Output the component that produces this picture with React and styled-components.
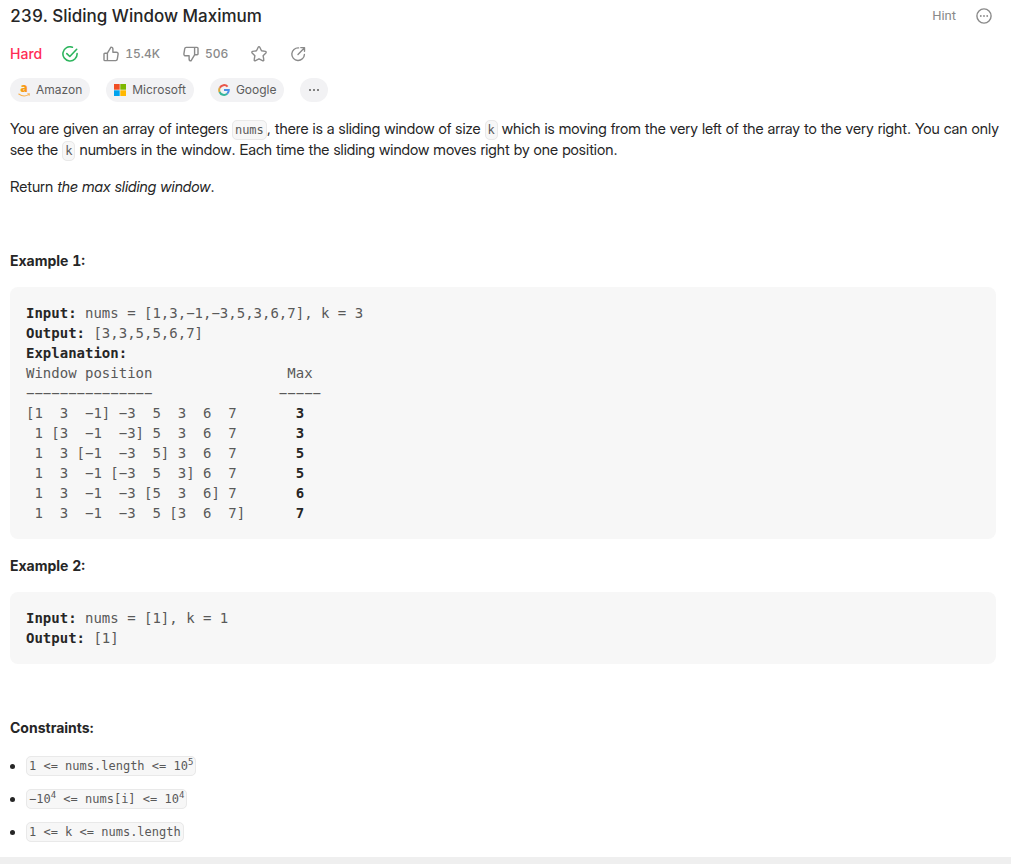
import React from "react";
import styled, { createGlobalStyle } from "styled-components";

const Global = createGlobalStyle`
  * { box-sizing: border-box; }
  body {
    margin: 0;
    background: #fff;
    color: #262626;
    font-family: Inter, "Liberation Sans", sans-serif;
    font-size: 14px;
    line-height: 21px;
    font-variant-numeric: tabular-nums;
  }
`;

const Page = styled.main`
  padding: 4px 15px 4px 10px;
  border-bottom: 7px solid #efefef;
`;

const Header = styled.header`
  display: flex;
  align-items: center;
  justify-content: space-between;
  padding-right: 4px;
`;

const Title = styled.h1`
  margin: 0;
  font-size: 17px;
  line-height: 24px;
  font-weight: 500;
`;

const Row = styled.div`
  display: flex;
  align-items: center;
  gap: ${(p) => p.$gap}px;
  margin-top: ${(p) => p.$top || 0}px;
`;

const IconButton = styled.button`
  display: flex;
  align-items: center;
  gap: 6px;
  padding: 0;
  border: 0;
  background: none;
  color: #8a8a8a;
  font-family: Inter, sans-serif;
  font-size: 12px;
  line-height: 16px;
  font-weight: 500;
  font-variant-numeric: tabular-nums;
  cursor: pointer;
  svg { display: block; }
`;

const HintButton = styled(IconButton)`
  font-family: Roboto, sans-serif;
  font-size: 13px;
  font-weight: 400;
`;

const Difficulty = styled.span`
  color: #ff2d55;
  font-weight: 500;
  margin-right: 4px;
`;

const Solved = styled.span`
  display: flex;
  color: #2db55d;
  margin-right: 9px;
`;

const Tag = styled.button`
  display: flex;
  align-items: center;
  gap: 6px;
  height: 24px;
  padding: 0 8px;
  border: 0;
  border-radius: 12px;
  background: #f2f2f4;
  color: #5c5c5c;
  font: 400 12px/16px Inter, sans-serif;
  cursor: pointer;
  svg { display: block; }
`;

const Paragraph = styled.p`
  margin: 16px -8px 16px 0;
  font-family: "Inter Display", Inter, sans-serif;
  font-size: 15px;
`;

const Heading = styled.h2`
  margin: 16px 0;
  font-size: 14px;
  line-height: 21px;
  font-weight: 700;
`;

const Code = styled.code`
  padding: 2px;
  border: 1px solid #e9e9e9;
  border-radius: 5px;
  background: #f7f7f7;
  color: #595959;
  font: 12px/16px "DejaVu Sans Mono", monospace;
  white-space: nowrap;
  sup {
    font-size: 9px;
    line-height: 0;
  }
`;

const Block = styled.pre`
  margin: 0 0 16px;
  padding: 16px;
  border-radius: 8px;
  background: #f7f7f7;
  color: #595959;
  font: 14px/20px "DejaVu Sans Mono", monospace;
  overflow-x: auto;
  b { color: #262626; }
`;

const List = styled.ul`
  margin: 0;
  padding: 0 0 0 16px;
  list-style: none;
`;

const Item = styled.li`
  margin-bottom: 12px;
  &::before {
    content: "";
    display: inline-block;
    width: 5px;
    height: 5px;
    margin: 0 11px 0 -16px;
    border-radius: 50%;
    background: #262626;
    vertical-align: middle;
  }
`;

const Line = ({ size = 16, children }) => (
  <svg width={size} height={size} viewBox="0 0 16 16" fill="none" stroke="currentColor" strokeWidth="1.4" strokeLinecap="round" strokeLinejoin="round" aria-hidden="true">
    {children}
  </svg>
);

const thumb = "M4.4 7.2H1.9a.9.9 0 0 0-.9.9v5.6a.9.9 0 0 0 .9.9h2.5M4.4 7.2v7.4h8.3a1.6 1.6 0 0 0 1.6-1.4l.8-5a1.7 1.7 0 0 0-1.7-2H9.9V3.1A2 2 0 0 0 8 1.1L4.4 7.2";

const Check = () => (
  <Line>
    <path strokeWidth="1.6" d="M10.4 1.2A7.1 7.1 0 1 0 15.1 7.6" />
    <path strokeWidth="1.6" d="M4.8 7.6l3 2.9 6.9-7.2" />
  </Line>
);
const Like = () => <Line><path d={thumb} /></Line>;
const Dislike = () => <Line><g transform="rotate(180 8 8)"><path d={thumb} /></g></Line>;
const Star = () => (
  <Line><path d="M7.2 1.3a.9.9 0 0 1 1.6 0l1.7 3.5 3.9.6a.9.9 0 0 1 .5 1.5l-2.8 2.8.7 4a.9.9 0 0 1-1.3 1L8 12.8l-3.5 1.9a.9.9 0 0 1-1.3-1l.7-4-2.8-2.8a.9.9 0 0 1 .5-1.5l3.9-.6z" /></Line>
);
const Share = () => (
  <Line>
    <path d="M8.6 1.9A6.3 6.3 0 1 0 14.4 8.4" />
    <path d="M8 8.4l6.3-6.5M10.8 1.6h3.7v3.7" />
  </Line>
);
const More = () => (
  <Line>
    <circle cx="8" cy="8" r="7.1" />
    <g fill="currentColor" stroke="none">
      <circle cx="4.8" cy="8" r=".9" /><circle cx="8" cy="8" r=".9" /><circle cx="11.2" cy="8" r=".9" />
    </g>
  </Line>
);

const Amazon = () => (
  <svg width="12" height="22" viewBox="0 0 12 22" aria-hidden="true">
    <text x="6" y="13" textAnchor="middle" fontFamily="Open Sans" fontWeight="800" fontSize="12" fill="#f79b14">a</text>
    <path d="M.8 15c3 2.2 7 2.3 9.8.6" fill="none" stroke="#f9b04a" strokeWidth="1.1" strokeLinecap="round" />
    <path d="M9.6 14.7l2-.1-.4 1.9" fill="none" stroke="#f9b04a" strokeWidth=".8" strokeLinecap="round" />
  </svg>
);
const Microsoft = () => (
  <svg width="12" height="12" viewBox="0 0 12 12" aria-hidden="true">
    <path fill="#f04e23" d="M0 0h5.7v5.7H0z" /><path fill="#7db700" d="M6.3 0H12v5.7H6.3z" />
    <path fill="#00a3ee" d="M0 6.3h5.7V12H0z" /><path fill="#ffb800" d="M6.3 6.3H12V12H6.3z" />
  </svg>
);
const Google = () => (
  <svg width="12" height="12" viewBox="0 0 12 12" fill="none" strokeWidth="2" aria-hidden="true">
    <path stroke="#e9564a" d="M9.6 2.7A4.8 4.8 0 0 0 1.8 3.7" />
    <path stroke="#d9a53c" d="M1.8 3.7a4.8 4.8 0 0 0-.2 4.3" />
    <path stroke="#35b59a" d="M1.6 8a4.8 4.8 0 0 0 7.6 1.7" />
    <path stroke="#4a90e8" d="M9.2 9.7A4.8 4.8 0 0 0 10.8 6H6" />
  </svg>
);
const Dots = () => (
  <svg width="12" height="12" viewBox="0 0 12 12" fill="#5c5c5c" aria-hidden="true">
    <circle cx="2" cy="6" r="1" /><circle cx="6" cy="6" r="1" /><circle cx="10" cy="6" r="1" />
  </svg>
);

const rows = [
  ["[1  3  −1] −3  5  3  6  7 ", 3],
  [" 1 [3  −1  −3] 5  3  6  7 ", 3],
  [" 1  3 [−1  −3  5] 3  6  7 ", 5],
  [" 1  3  −1 [−3  5  3] 6  7 ", 5],
  [" 1  3  −1  −3 [5  3  6] 7 ", 6],
  [" 1  3  −1  −3  5 [3  6  7]", 7],
];

export default function App() {
  return (
    <>
      <Global />
      <Page>
        <Header>
          <Title>239. Sliding Window Maximum</Title>
          <Row $gap={20}>
            <HintButton>Hint</HintButton>
            <IconButton aria-label="More"><More /></IconButton>
          </Row>
        </Header>
        <Row $gap={16} $top={15}>
          <Difficulty>Hard</Difficulty>
          <Solved><Check /></Solved>
          <Row $gap={23}>
            <IconButton><Like />15.4K</IconButton>
            <IconButton><Dislike />506</IconButton>
            <IconButton aria-label="Favorite"><Star /></IconButton>
            <IconButton aria-label="Share"><Share /></IconButton>
          </Row>
        </Row>
        <Row $gap={16} $top={14}>
          <Tag><Amazon />Amazon</Tag>
          <Tag><Microsoft />Microsoft</Tag>
          <Tag><Google />Google</Tag>
          <Tag aria-label="More companies"><Dots /></Tag>
        </Row>
        <Paragraph>
          You are given an array of integers <Code>nums</Code>, there is a sliding window of size <Code>k</Code> which is moving from the very left of the array to the very right. You can only see the <Code>k</Code> numbers in the window. Each time the sliding window moves right by one position.
        </Paragraph>
        <Paragraph>Return <em>the max sliding window</em>.</Paragraph>
        <Paragraph>&nbsp;</Paragraph>
        <Heading>Example 1:</Heading>
        <Block>
          <b>Input:</b>{" nums = [1,3,−1,−3,5,3,6,7], k = 3\n"}
          <b>Output:</b>{" [3,3,5,5,6,7]\n"}
          <b>Explanation:</b>{"\n"}
          {"Window position                Max\n"}
          {"−−−−−−−−−−−−−−−               −−−−−\n"}
          {rows.map(([line, max], i) => (
            <React.Fragment key={i}>{line}{"      "}<b>{max}</b>{"\n"}</React.Fragment>
          ))}
        </Block>
        <Heading>Example 2:</Heading>
        <Block>
          <b>Input:</b>{" nums = [1], k = 1\n"}
          <b>Output:</b>{" [1]"}
        </Block>
        <Paragraph>&nbsp;</Paragraph>
        <Heading>Constraints:</Heading>
        <List>
          <Item><Code>1 &lt;= nums.length &lt;= 10<sup>5</sup></Code></Item>
          <Item><Code>−10<sup>4</sup> &lt;= nums[i] &lt;= 10<sup>4</sup></Code></Item>
          <Item><Code>1 &lt;= k &lt;= nums.length</Code></Item>
        </List>
      </Page>
    </>
  );
}
